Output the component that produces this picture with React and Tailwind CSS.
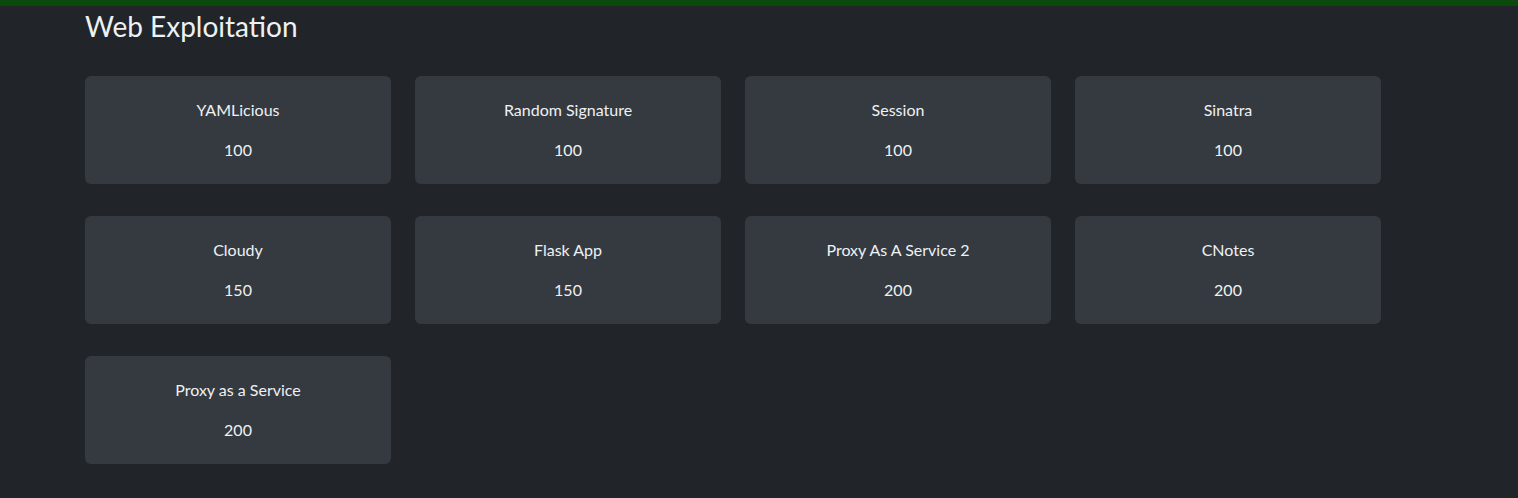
const challenges = [
  { name: 'YAMLicious', points: 100 },
  { name: 'Random Signature', points: 100 },
  { name: 'Session', points: 100 },
  { name: 'Sinatra', points: 100 },
  { name: 'Cloudy', points: 150 },
  { name: 'Flask App', points: 150 },
  { name: 'Proxy As A Service 2', points: 200 },
  { name: 'CNotes', points: 200 },
  { name: 'Proxy as a Service', points: 200 },
]

export default function App() {
  return (
    <div className="min-h-[498px] bg-[#212529] text-[#eef1f4]" style={{ fontFamily: 'Lato, "Open Sans", sans-serif' }}>
      <div className="h-[6px] bg-[#0a4a0c]" />
      <div className="px-[85px]">
        <h2 className="text-[28px] leading-[42px] -mt-[1px]">Web Exploitation</h2>
        <div className="mt-[29px] grid grid-cols-[repeat(4,306px)] gap-x-6 gap-y-8">
          {challenges.map((c) => (
            <div
              key={c.name}
              className="h-[108px] rounded-md bg-[#343a40] flex flex-col items-center pt-[23px] text-[16px] leading-[22px]"
            >
              <div>{c.name}</div>
              <div className="mt-[18px]">{c.points}</div>
            </div>
          ))}
        </div>
      </div>
    </div>
  )
}
